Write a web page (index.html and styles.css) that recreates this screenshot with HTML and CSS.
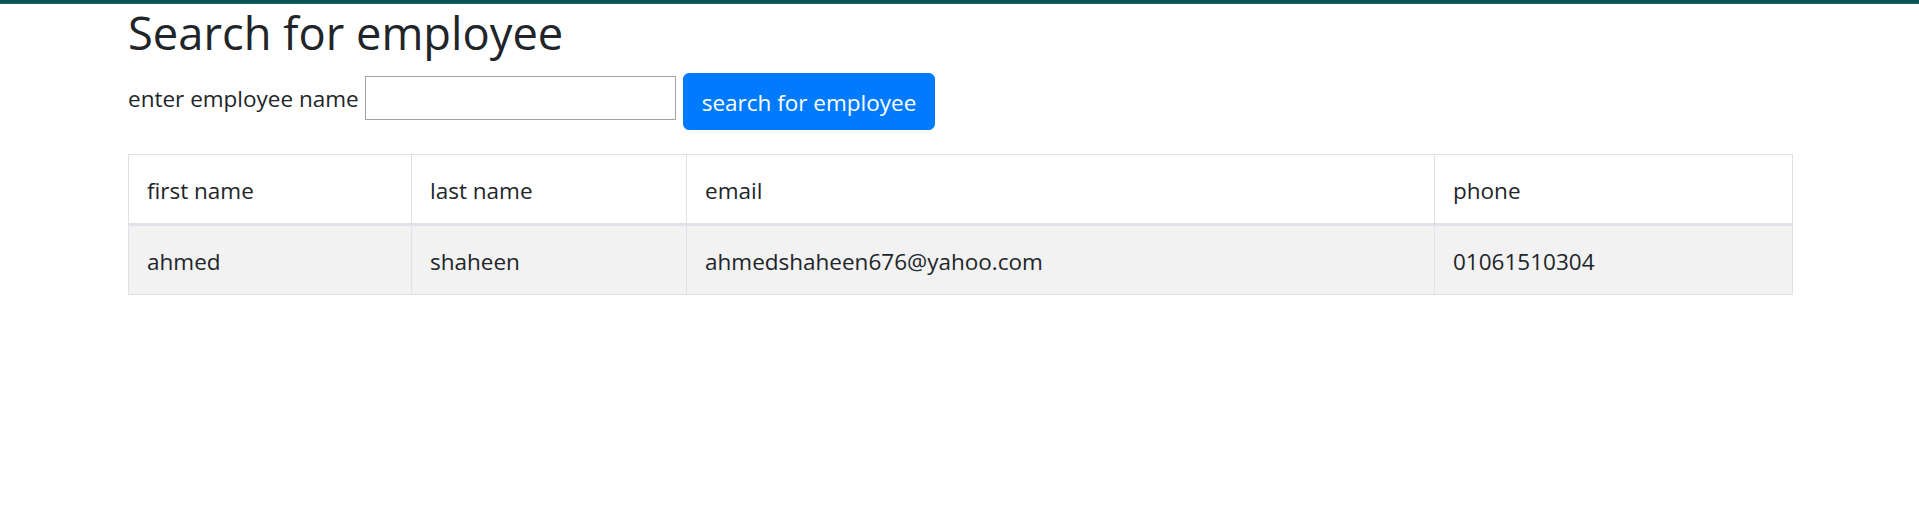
FILE: index.html
```html
<!DOCTYPE html>
<html lang="en">
<head>
<meta charset="utf-8">
<title>Search for employee</title>
<link rel="stylesheet" href="styles.css">
</head>
<body>
<div class="topbar"></div>
<main class="container">
  <h2 class="title">Search for employee</h2>
  <form class="search">
    <label class="search-label" for="name">enter employee name</label>
    <input class="search-input" id="name" type="text">
    <button class="btn-primary" type="button">search for employee</button>
  </form>
  <table class="table">
    <colgroup>
      <col class="c1"><col class="c2"><col class="c3"><col class="c4">
    </colgroup>
    <thead>
      <tr><th>first name</th><th>last name</th><th>email</th><th>phone</th></tr>
    </thead>
    <tbody>
      <tr><td>ahmed</td><td>shaheen</td><td>ahmedshaheen676@yahoo.com</td><td>01061510304</td></tr>
    </tbody>
  </table>
</main>
</body>
</html>
```
FILE: styles.css
```css
* { box-sizing: border-box; }
html, body { margin: 0; padding: 0; background: #fff; }
body {
  font-family: "Open Sans", "Noto Sans", sans-serif;
  font-size: 22.5px;
  line-height: 36px;
  color: #212529;
}
.topbar {
  height: 4px;
  background: linear-gradient(#0a5456, #0a5456 75%, #2b7a7c);
}
.container {
  padding: 0 127px 0 128px;
}
.title {
  margin: 0 0 12px;
  font-size: 45.3px;
  font-weight: 400;
  line-height: 57px;
}
.search {
  display: flex;
  align-items: flex-start;
  margin: 0 0 24px;
}
.search-label {
  margin-top: 8px;
  margin-right: 6px;
}
.search-input {
  width: 311px;
  height: 44px;
  margin-top: 3px;
  border: 1px solid #a3a3a3;
  border-radius: 0;
  padding: 2px 4px;
  font: inherit;
}
.btn-primary {
  margin-left: 7px;
  background: #007bff;
  border: 1px solid #007bff;
  color: #fff;
  border-radius: 6px;
  padding: 10px 18px 8px;
  font-family: inherit;
  font-size: 22.5px;
  line-height: 37px;
  cursor: pointer;
}
.table {
  width: 100%;
  border-collapse: collapse;
  table-layout: fixed;
}
.c1 { width: 283px; }
.c2 { width: 275px; }
.c3 { width: 748px; }
.c4 { width: 358px; }
.table th, .table td {
  padding: 20px 18px 16px;
  border: 1px solid #dee2e6;
  text-align: left;
  font-weight: 400;
  line-height: 32px;
  vertical-align: top;
}
.table thead th {
  vertical-align: bottom;
  border-bottom: 3px solid #dee2e6;
}
.table tbody tr { background: #f2f2f2; }
```
